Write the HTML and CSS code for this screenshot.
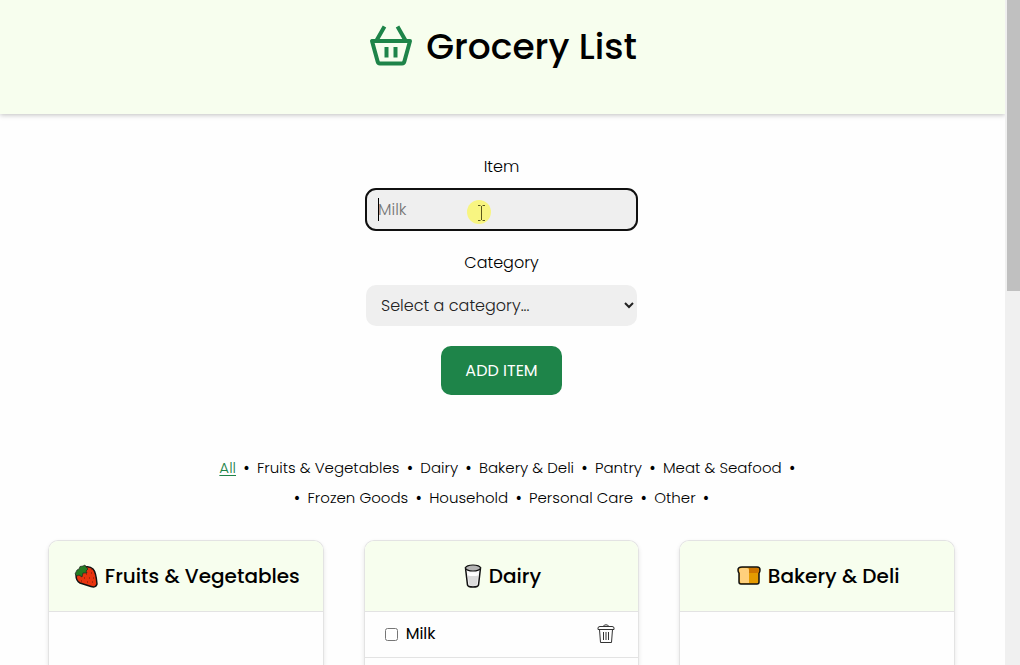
FILE: index.html
```html
<!DOCTYPE html>
<html lang="en">
<head>
<meta charset="utf-8">
<meta name="viewport" content="width=device-width, initial-scale=1">
<title>Grocery List</title>
<link rel="stylesheet" href="styles.css">
</head>
<body>
<div class="page">
  <header class="banner">
    <svg class="basket" viewBox="0 0 44 44" fill="none" stroke="#1e8449" stroke-width="4" aria-hidden="true">
      <path d="M8.500 15.500 16.500 1.500M37.500 15.500 29.500 1.500"/>
      <path d="M4 16H42L36.500 36Q36 38.500 34 38.500H12Q10 38.500 9.500 36Z" stroke-linejoin="round"/>
      <path d="M18.500 22V32.500M27.500 22V32.500"/>
    </svg>
    <h1 class="title">Grocery List</h1>
  </header>
  <main class="content">
    <form class="item-form">
      <label class="label" for="item">Item</label>
      <div class="input-wrap">
        <input class="field text-field" id="item" type="text" placeholder="Milk">
        <span class="caret"></span>
        <svg class="pointer" viewBox="0 0 24 24" aria-hidden="true">
          <circle cx="12" cy="12" r="12" fill="#f8f581"/>
          <path d="M11 5.500H13.500M15.500 5.500H18M14.500 6V20M11 20.500H13.500M15.500 20.500H18" fill="none" stroke="#5c5a1c"/>
        </svg>
      </div>
      <label class="label" for="category">Category</label>
      <select class="field select-field" id="category"><option>Select a category...</option></select>
      <button class="add" type="button">ADD ITEM</button>
    </form>
    <nav class="filters" aria-label="Categories">
      <div class="filter-row first-row">
        <a class="filter active" href="#all">All</a><span class="dot">•</span>
        <a class="filter" href="#produce">Fruits &amp; Vegetables</a><span class="dot">•</span>
        <a class="filter" href="#dairy">Dairy</a><span class="dot">•</span>
        <a class="filter" href="#bakery">Bakery &amp; Deli</a><span class="dot">•</span>
        <a class="filter" href="#pantry">Pantry</a><span class="dot">•</span>
        <a class="filter" href="#meat">Meat &amp; Seafood</a><span class="dot">•</span>
      </div>
      <div class="filter-row">
        <span class="dot">•</span><a class="filter" href="#frozen">Frozen Goods</a><span class="dot">•</span>
        <a class="filter" href="#household">Household</a><span class="dot">•</span>
        <a class="filter" href="#care">Personal Care</a><span class="dot">•</span>
        <a class="filter" href="#other">Other</a><span class="dot">•</span>
      </div>
    </nav>
    <div class="cards">
      <section class="card" id="produce">
        <h2 class="card-title">
          <svg class="emoji" viewBox="0 0 24 24" aria-hidden="true">
            <path d="M8 4Q15 1 19 5Q22 8 23 20Q22 24 17 22.500L6 19Q2 17 2 11Z" fill="#e8340f" stroke="#111" stroke-width="1.500"/>
            <path d="M1 10 3 6 5 5 6 2.500 9 2 11 1 12 3 14 5 12 7 13 9 9 9 8 13 5 11 3 12Z" fill="#237b22" stroke="#222" stroke-width=".7"/>
            <path d="M12 10h1M17 9h1M10 14h1M15 14h1M19 14h1M7 17h1M13 18h1M18 18h1M17 5h1" stroke="#701b0b"/>
          </svg>
          Fruits &amp; Vegetables
        </h2>
      </section>
      <section class="card" id="dairy">
        <h2 class="card-title">
          <svg class="emoji glass" viewBox="0 0 18 24" aria-hidden="true">
            <path d="M1.500 4 3.500 21Q4 23 9 23T14.500 21L16.500 4Z" fill="#f8f8f8" stroke="#111" stroke-width="1.500"/>
            <ellipse cx="9" cy="4" rx="7.500" ry="3" fill="#b4b4b4" stroke="#111" stroke-width="1.200"/>
            <path d="M3.500 10Q9 12 14.500 10L13 20Q12 22 9 22T5 20Z" fill="#dcdcdc"/>
            <ellipse cx="9" cy="10.500" rx="5.500" ry="1.500" fill="#fff"/>
          </svg>
          Dairy
        </h2>
        <div class="entry">
          <input class="check" type="checkbox" id="milk">
          <label class="entry-name" for="milk">Milk</label>
          <button class="delete" type="button" aria-label="Delete Milk">
            <svg class="trash" viewBox="0 0 18 20" fill="none" stroke="#333" aria-hidden="true">
              <path d="M6.500 2.500V2Q7 .8 9 .8T11.500 2V2.500M1 5.500V4Q1 2.500 3 2.500H15Q17 2.500 17 4V5.500ZM2.500 5.500 3.500 18.500H14.500L15.500 5.500"/>
              <path d="M6.500 8V16M9 8V16M11.500 8V16"/>
            </svg>
          </button>
        </div>
      </section>
      <section class="card" id="bakery">
        <h2 class="card-title">
          <svg class="emoji" viewBox="0 0 24 24" aria-hidden="true">
            <path d="M5 3H20Q23 3 23 6Q23 8 22 9V18Q22 20 20 20H4Q2 20 2 18V9Q1 8 1 6Q1 3 5 3Z" fill="#e59b00" stroke="#111" stroke-width="1.500"/>
            <path d="M12 4H20Q22 4 22 7Q22 9 20 9H12Z" fill="#cf7500"/>
            <path d="M5 4H10Q12 4 12 6V19H4Q3 19 3 17V9Q2 7 2 6Q2 4 5 4Z" fill="#ffd07c"/>
          </svg>
          Bakery &amp; Deli
        </h2>
      </section>
    </div>
  </main>
</div>
<div class="scroll-track" aria-hidden="true"><div class="scroll-thumb"></div></div>
</body>
</html>
```
FILE: styles.css
```css
* { box-sizing: border-box; }
body {
  margin: 0;
  height: 100vh;
  display: flex;
  overflow: hidden;
  background: #fefefe;
  color: #000;
  font: 300 16px/24px Poppins, Inter, sans-serif;
}
.page {
  flex: 1;
  min-width: 0;
  display: flex;
  flex-direction: column;
}
.banner {
  display: flex;
  justify-content: center;
  align-items: center;
  gap: 14px;
  padding: 20px 0 40px;
  background: #f7feee;
  box-shadow: 0 1px 5px rgba(0, 0, 0, .25);
}
.basket { width: 44px; height: 44px; }
.title { margin: 0; font-size: 36px; line-height: 54px; font-weight: 500; }
.content {
  flex: 1;
  display: flex;
  flex-direction: column;
  padding: 41px 50px 0 48px;
}
.item-form { display: flex; flex-direction: column; align-items: center; }
.label { margin-bottom: 10px; }
.input-wrap { position: relative; margin-bottom: 21px; }
.field {
  display: block;
  width: 271px;
  height: 41px;
  border: 0;
  border-radius: 10px;
  background: #efefef;
  color: #222;
  font: inherit;
}
.text-field {
  padding: 0 12px;
  outline: 2px solid #101010;
  outline-offset: -1px;
}
.text-field::placeholder { color: #757575; opacity: 1; }
.caret {
  position: absolute;
  left: 12px;
  top: 9px;
  width: 1px;
  height: 23px;
  background: #000;
}
.pointer {
  position: absolute;
  left: 101px;
  top: 11px;
  width: 24px;
  height: 24px;
}
.select-field { padding: 0 1px 0 11px; }
.add {
  margin-top: 20px;
  padding: 12px 24px;
  border: 0;
  border-radius: 10px;
  background: #1e8449;
  color: #fff;
  font: inherit;
  line-height: 25px;
  font-weight: 400;
}
.filters { margin-top: 58px; font-size: 15px; line-height: 30px; }
.filter-row { display: flex; justify-content: center; gap: 7px; }
.first-row { padding-left: 12px; }
.dot { font-weight: 500; }
.filter { color: inherit; text-decoration: none; }
.active { color: #1e8449; text-decoration: underline; text-underline-offset: 2px; }
.cards {
  flex: 1;
  display: grid;
  grid-template-columns: repeat(3, 1fr);
  gap: 40px;
  margin-top: 27px;
}
.card {
  border: 1px solid #e3e3e3;
  border-bottom: 0;
  border-radius: 10px 10px 0 0;
  box-shadow: 0 2px 4px rgba(0, 0, 0, .1);
  overflow: hidden;
}
.card-title {
  display: flex;
  justify-content: center;
  align-items: center;
  gap: 7px;
  margin: 0;
  padding: 20px 0 20px 2px;
  border-bottom: 1px solid #e3e3e3;
  background: #f7feee;
  font-size: 20px;
  line-height: 30px;
  font-weight: 500;
}
.emoji { width: 24px; height: 24px; }
.glass { width: 18px; }
.entry {
  display: flex;
  align-items: center;
  padding: 10px 23px 11px 20px;
  border-bottom: 1px solid #e3e3e3;
}
.check { width: 13px; height: 13px; margin: 0 8px 0 0; }
.entry-name { flex: 1; font-weight: 400; }
.delete { display: flex; padding: 0; border: 0; background: none; }
.trash { width: 18px; height: 20px; }
.scroll-track { width: 15px; padding-left: 2px; background: #f0f0f0; }
.scroll-thumb { height: 43.8%; background: #c0c0c0; }
```
